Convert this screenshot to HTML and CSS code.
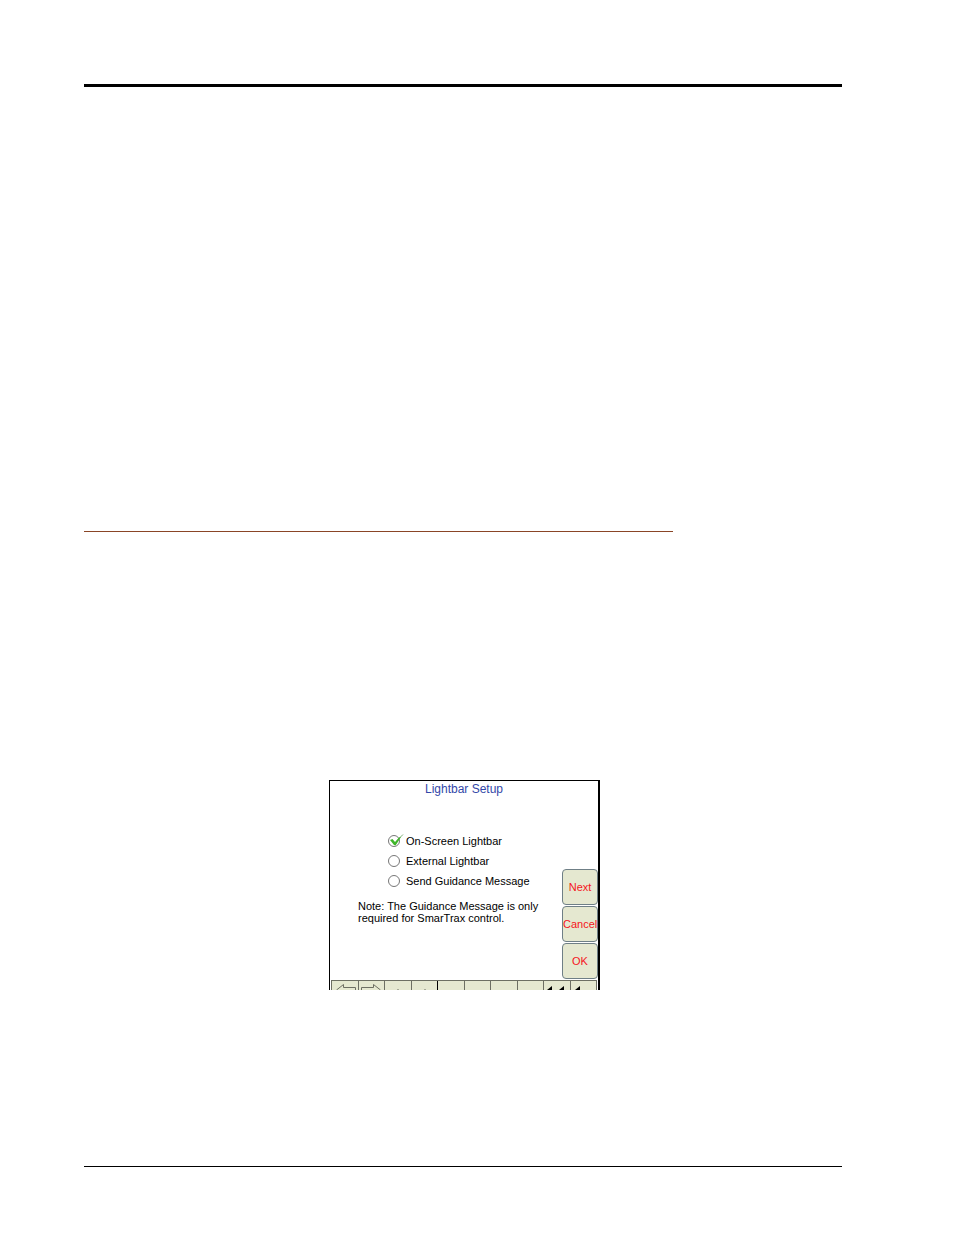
FILE: index.html
```html
<!DOCTYPE html>
<html lang="en">
<head>
  <meta charset="UTF-8">
  <meta name="viewport" content="width=device-width, initial-scale=1.0">
  <title>Lightbar Setup</title>
  <link rel="stylesheet" href="styles.css">
</head>
<body>

<div class="page">
  <header class="page-header"></header>

  <main class="page-main">
    <hr class="section-rule">

    <form class="screen">
      <h1 class="screen-title">Lightbar Setup</h1>

      <div class="screen-body">
        <div class="settings">
          <div class="options">
            <label class="option">
              <span class="option-mark">
                <input class="option-input" type="radio" name="lightbar" value="screen" checked>
                <svg class="option-check" viewBox="0 0 16 14" aria-hidden="true">
                  <path class="check-tail" d="M10 5.500 L15 0.500"/>
                  <path class="check-fill" d="M2 6 L4.500 5 L7 8 L11 3.500 L13 3 L10.500 7 L7.500 11.500 L6 11 Z"/>
                </svg>
              </span>
              <span>On-Screen Lightbar</span>
            </label>
            <label class="option">
              <span class="option-mark">
                <input class="option-input" type="radio" name="lightbar" value="external">
              </span>
              <span>External Lightbar</span>
            </label>
            <label class="option">
              <span class="option-mark">
                <input class="option-input" type="radio" name="lightbar" value="message">
              </span>
              <span>Send Guidance Message</span>
            </label>
          </div>
          <p class="note">Note: The Guidance Message is only<br>required for SmarTrax control.</p>
        </div>

        <div class="actions">
          <button class="action" type="button">Next</button>
          <button class="action" type="button">Cancel</button>
          <button class="action" type="button">OK</button>
        </div>
      </div>

      <!-- top edge of the map toolbar -->
      <div class="toolbar">
        <div class="tool">
          <svg class="tool-icon" viewBox="0 0 26 9"><path class="outline" d="M4.500 9 L11.500 3.500 V6.500 H23.500 V9"/></svg>
        </div>
        <div class="tool">
          <svg class="tool-icon" viewBox="0 0 26 9"><path class="outline" d="M2.500 9 V6.500 H14.500 V3.500 L21.500 9"/></svg>
        </div>
        <div class="tool">
          <svg class="tool-icon" viewBox="0 0 26 9"><path class="speck" d="M12 9 L13 8 L14 9 Z"/></svg>
        </div>
        <div class="tool">
          <svg class="tool-icon" viewBox="0 0 26 9"><path class="speck" d="M12 9 L13 8 L14 9 Z"/></svg>
        </div>
        <div class="tool tool-dark"></div>
        <div class="tool"></div>
        <div class="tool"></div>
        <div class="tool"></div>
        <div class="tool">
          <svg class="tool-icon" viewBox="0 0 26 9"><path class="solid" d="M3 9 L8 5 V9 Z M15 9 L20 5 V9 Z"/></svg>
        </div>
        <div class="tool">
          <svg class="tool-icon" viewBox="0 0 26 9"><path class="solid" d="M4 9 L9 5 V9 Z"/></svg>
        </div>
      </div>
    </form>
  </main>

  <footer class="page-footer"></footer>
</div>

</body>
</html>
```

FILE: styles.css
```css
body {
  margin: 0;
  background: #fff;
  color: #000;
  font-family: "Liberation Sans", Arial, sans-serif;
}

/* page */
.page {
  display: flex;
  flex-direction: column;
  box-sizing: border-box;
  min-height: 100vh;
  padding: 84px 112px 68px 84px;
}

.page-header {
  border-top: 3px solid #000;
}

.page-main {
  flex: 1;
  padding-top: 444px;
}

.section-rule {
  margin: 0 169px 248px 0;
  border: 0;
  border-top: 1px solid #8a4526;
}

.page-footer {
  border-top: 1px solid #000;
}

/* screen */
.screen {
  box-sizing: border-box;
  width: 271px;
  margin-left: 245px;
  border: 1px solid #000;
  border-right-width: 2px;
  border-bottom: 0;
}

.screen-title {
  margin: 0;
  color: #3347a8;
  font-size: 12px;
  font-weight: normal;
  line-height: 16px;
  text-align: center;
}

.screen-body {
  display: flex;
  justify-content: space-between;
  padding-bottom: 1px;
}

.settings {
  padding: 34px 0 0 28px;
  font-size: 11px;
}

.options {
  padding-left: 30px;
}

.option {
  display: flex;
  align-items: center;
  gap: 6px;
  height: 20px;
}

.option-mark {
  position: relative;
  display: flex;
}

.option-input {
  appearance: none;
  box-sizing: border-box;
  width: 12px;
  height: 12px;
  margin: 0;
  border: 1px solid #777;
  border-radius: 50%;
  background: #fff;
}

.option-check {
  position: absolute;
  top: -1px;
  left: 0;
  width: 16px;
  height: 14px;
}

.check-fill {
  fill: #3fb52a;
}

.check-tail {
  fill: none;
  stroke: #7fae78;
}

.note {
  margin: 9px 0 0;
  line-height: 12px;
  white-space: nowrap;
}

/* buttons */
.actions {
  display: flex;
  flex-direction: column;
  justify-content: flex-end;
  gap: 1px;
  padding-top: 72px;
}

.action {
  box-sizing: border-box;
  width: 36px;
  height: 36px;
  padding: 0;
  border: 1px solid #6f7f86;
  border-radius: 4px;
  background: #e5e8d0;
  color: #f5141c;
  font-family: inherit;
  font-size: 11px;
}

/* toolbar */
.toolbar {
  display: grid;
  grid-template-columns: repeat(10, minmax(0, 1fr));
  margin: 0 1px;
  border-top: 1px solid #6d6f63;
  border-right: 1px solid #6d6f63;
  background: #e5e8d0;
}

.tool {
  height: 9px;
  border-left: 1px solid #6d6f63;
}

.tool-dark {
  border-left-color: #000;
}

.tool-icon {
  display: block;
  width: 26px;
  height: 9px;
}

.outline {
  fill: none;
  stroke: #6d6f63;
}

.speck {
  fill: #6d6f63;
}

.solid {
  fill: #000;
}
```
